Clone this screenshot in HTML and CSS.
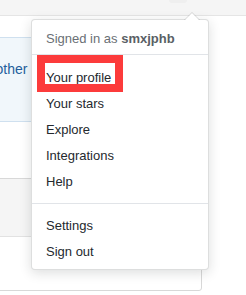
FILE: index.html
```html
<!doctype html>
<html lang="en">
<head>
  <meta charset="utf-8">
  <title>Account menu</title>
  <link rel="stylesheet" href="styles.css">
</head>
<body>
  <div class="topbar">
    <span class="avatar"></span>
  </div>
  <div class="page">
    <div class="notice">
      <span class="notice-text">another</span>
    </div>
    <div class="box">
      <div class="box-head"></div>
      <div class="box-body"></div>
    </div>
  </div>

  <div class="menu">
    <div class="menu-header">Signed in as <strong>smxjphb</strong></div>
    <div class="menu-group">
      <a class="menu-item marked" href="#">Your profile</a>
      <a class="menu-item" href="#">Your stars</a>
      <a class="menu-item" href="#">Explore</a>
      <a class="menu-item" href="#">Integrations</a>
      <a class="menu-item" href="#">Help</a>
    </div>
    <div class="menu-divider"></div>
    <div class="menu-group">
      <a class="menu-item" href="#">Settings</a>
      <a class="menu-item" href="#">Sign out</a>
    </div>
  </div>
</body>
</html>
```

FILE: styles.css
```css
html{
  background-color: #fff;
}
body{
  margin: 0;
  padding: 0;
  font-family: "Liberation Sans", Arial, sans-serif;
  color: #24292e;
  overflow: hidden;
}
.topbar{
  display: flex;
  justify-content: flex-end;
  height: 15px;
  background-color: #f5f5f5;
  border-bottom: 1px solid #e5e5e5;
}
.avatar{
  width: 18px;
  height: 3px;
  margin-right: 59px;
  background-color: #efefef;
  border-radius: 0 0 9px 9px;
}
.page{
  padding-top: 21px;
}
.notice{
  margin-left: -40px;
  width: 242px;
  box-sizing: border-box;
  padding: 21px 0 42px 20px;
  background-color: #f1f7fb;
  border-top: 1px solid #cfe0ef;
  border-bottom: 1px solid #cfe0ef;
  font-size: 14px;
  line-height: 20px;
}
.notice-text{
  color: #245f9c;
  white-space: nowrap;
}
.box{
  margin-top: 56px;
  margin-left: -40px;
  width: 242px;
  box-sizing: border-box;
  border: 1px solid #d8d8d8;
  border-radius: 3px;
}
.box-head{
  height: 57px;
  background-color: #f5f5f5;
  border-bottom: 1px solid #e2e2e2;
}
.box-body{
  height: 53px;
}

/* dropdown */
.menu{
  position: absolute;
  left: 31px;
  top: 19px;
  width: 178px;
  box-sizing: border-box;
  padding: 4px 0;
  background-color: #fff;
  border: 1px solid rgba(27,31,35,0.15);
  border-radius: 4px;
  box-shadow: 0 3px 12px rgba(27,31,35,0.15);
  font-size: 13px;
}
.menu::before,
.menu::after{
  content: "";
  position: absolute;
  display: inline-block;
}
.menu::before{
  top: -16px;
  right: 8px;
  border: 8px solid transparent;
  border-bottom-color: rgba(27,31,35,0.15);
}
.menu::after{
  top: -14px;
  right: 9px;
  border: 7px solid transparent;
  border-bottom-color: #fff;
}
.menu-header{
  padding: 5px 14px 6px;
  line-height: 19px;
  color: #6a6f75;
  border-bottom: 1px solid #e1e4e8;
}
.menu-header strong{
  color: #5a5f65;
}
.menu-group{
  padding-top: 10px;
}
.menu-divider + .menu-group{
  padding-top: 9px;
}
.menu-item{
  position: relative;
  display: block;
  padding: 0 14px;
  line-height: 26px;
  color: #24292e;
  text-decoration: none;
}
.menu-item.marked::after{
  content: "";
  position: absolute;
  left: 5px;
  top: -10px;
  width: 86px;
  height: 37px;
  box-sizing: border-box;
  border: 8px solid #fc3b3b;
}
.menu-divider{
  height: 1px;
  margin-top: 8px;
  background-color: #e1e4e8;
}
```
